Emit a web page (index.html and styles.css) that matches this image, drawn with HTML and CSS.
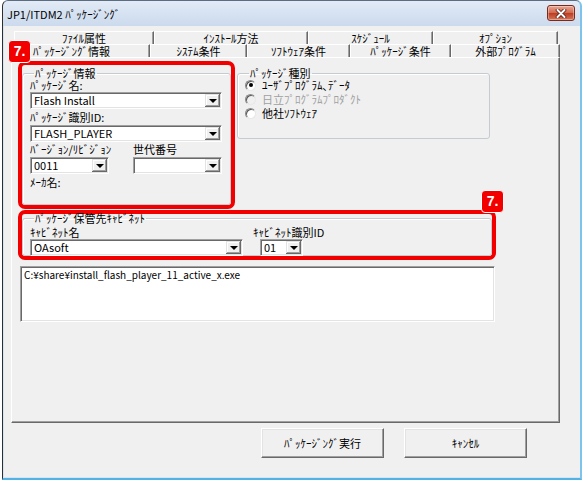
FILE: index.html
```html
<!DOCTYPE html>
<html lang="ja">
<head>
<meta charset="utf-8">
<title>JP1/ITDM2 ﾊﾟｯｹｰｼﾞﾝｸﾞ</title>
<link rel="stylesheet" href="styles.css">
</head>
<body>
<div class="window">
  <div class="titlebar">
    <span class="title">JP1/ITDM2 ﾊﾟｯｹｰｼﾞﾝｸﾞ</span>
    <div class="close"><svg width="12" height="9" viewBox="0 0 12 9"><path d="M2.5 1 L9.5 8 M9.5 1 L2.5 8" stroke="#5a1a10" stroke-width="3.6" stroke-linecap="round"/><path d="M2.5 1 L9.5 8 M9.5 1 L2.5 8" stroke="#fff" stroke-width="2" stroke-linecap="round"/></svg></div>
  </div>
  <div class="client">
    <div class="tabs">
      <div class="tabrow row1">
        <div class="tab">ﾌｧｲﾙ属性</div>
        <div class="tab">ｲﾝｽﾄｰﾙ方法</div>
        <div class="tab">ｽｹｼﾞｭｰﾙ</div>
        <div class="tab">ｵﾌﾟｼｮﾝ</div>
      </div>
      <div class="tabrow row2">
        <div class="tab selected">ﾊﾟｯｹｰｼﾞﾝｸﾞ情報</div>
        <div class="tab">ｼｽﾃﾑ条件</div>
        <div class="tab">ｿﾌﾄｳｪｱ条件</div>
        <div class="tab">ﾊﾟｯｹｰｼﾞ条件</div>
        <div class="tab">外部ﾌﾟﾛｸﾞﾗﾑ</div>
      </div>
      <div class="page">
        <div class="top">
          <div class="redbox red-info">
            <fieldset class="group info">
              <legend>ﾊﾟｯｹｰｼﾞ情報</legend>
              <div class="lbl">ﾊﾟｯｹｰｼﾞ名:</div>
              <div class="combo c-wide m1"><span class="val">Flash Install</span><span class="drop"></span></div>
              <div class="lbl m2">ﾊﾟｯｹｰｼﾞ識別ID:</div>
              <div class="combo c-wide m2"><span class="val">FLASH_PLAYER</span><span class="drop"></span></div>
              <div class="vergrid">
                <div class="lbl">ﾊﾞｰｼﾞｮﾝ/ﾘﾋﾞｼﾞｮﾝ</div>
                <div class="lbl">世代番号</div>
                <div class="combo"><span class="val">0011</span><span class="drop"></span></div>
                <div class="combo"><span class="val"></span><span class="drop"></span></div>
              </div>
              <div class="lbl m2">ﾒｰｶ名:</div>
            </fieldset>
          </div>
          <fieldset class="group kind">
            <legend>ﾊﾟｯｹｰｼﾞ種別</legend>
            <div class="radios">
              <div class="rrow"><span class="radio checked"></span><span>ﾕｰｻﾞﾌﾟﾛｸﾞﾗﾑ､ﾃﾞｰﾀ</span></div>
              <div class="rrow disabled"><span class="radio"></span><span>日立ﾌﾟﾛｸﾞﾗﾑﾌﾟﾛﾀﾞｸﾄ</span></div>
              <div class="rrow"><span class="radio"></span><span>他社ｿﾌﾄｳｪｱ</span></div>
            </div>
          </fieldset>
        </div>
        <div class="redbox red-cab">
          <fieldset class="group cab">
            <legend>ﾊﾟｯｹｰｼﾞ保管先ｷｬﾋﾞﾈｯﾄ</legend>
            <div class="cabgrid">
              <div class="lbl">ｷｬﾋﾞﾈｯﾄ名</div>
              <div class="lbl">ｷｬﾋﾞﾈｯﾄ識別ID</div>
              <div class="combo"><span class="val">OAsoft</span><span class="drop"></span></div>
              <div class="combo c-id"><span class="val">01</span><span class="drop"></span></div>
            </div>
          </fieldset>
        </div>
        <div class="textbox">C:¥share¥install_flash_player_11_active_x.exe</div>
      </div>
    </div>
    <div class="buttons">
      <div class="btn">ﾊﾟｯｹｰｼﾞﾝｸﾞ実行</div>
      <div class="btn">ｷｬﾝｾﾙ</div>
    </div>
    <div class="badge b1">7.</div>
    <div class="badge b2">7.</div>
  </div>
</div>
</body>
</html>
```
FILE: styles.css
```css
* { box-sizing: border-box; }
html, body { margin: 0; padding: 0; background: #fff; }
body {
  font: 11px/12px "Noto Sans CJK JP", "Liberation Sans", sans-serif;
  font-feature-settings: "palt" 1;
  color: #000;
}

.window {
  margin-left: 2px;
  width: 580px;
  height: 480px;
  border-left: 1px solid #2e2e2e;
  border-top: 1px solid #5d6d80;
  border-right: 2px solid #7cc4ec;
  border-bottom: 2px solid #52b2e4;
  border-radius: 6px 6px 0 0;
  background: linear-gradient(#e2ebf6, #cbdaed 25px, #d6e4f3 25px);
  display: flex;
  flex-direction: column;
}

.titlebar {
  height: 25px;
  display: flex;
  align-items: flex-start;
  padding-left: 4px;
}
.title {
  font-size: 11px;
  line-height: 14px;
  margin-top: 6px;
}
.close {
  margin-left: auto;
  margin-right: 5px;
  margin-top: 4px;
  width: 28px;
  height: 16px;
  border: 1px solid #7b2a1a;
  border-radius: 3px;
  background: linear-gradient(#eba793, #d06a50 48%, #bd3c22 52%, #d5765a);
  box-shadow: inset 0 0 0 1px rgba(255,255,255,0.35);
  display: flex;
  align-items: center;
  justify-content: center;
}

.client {
  flex: 1;
  margin: 0 0 1px 1px;
  background: #f0f0f0;
  position: relative;
  padding-top: 5px;
}

.tabs {
  margin-left: 7px;
  width: 549px;
}
.tabrow {
  display: grid;
  height: 13px;
}
.row1 {
  margin-left: 3px;
  grid-template-columns: 140px 154px 125px 125px;
}
.row2 {
  grid-template-columns: 139px 97px 103px 101px 109px;
}
.tab {
  border-top: 1px solid #fff;
  border-left: 1px solid #fff;
  border-right: 1px solid #696969;
  box-shadow: inset -1px 0 0 #a0a0a0;
  text-align: center;
  line-height: 12px;
  white-space: nowrap;
}
.tab.selected {
  padding-right: 18px;
}

.page {
  height: 366px;
  border-top: 1px solid #fff;
  border-left: 1px solid #fff;
  border-right: 1px solid #696969;
  border-bottom: 1px solid #696969;
  box-shadow: inset -1px -1px 0 #a0a0a0;
}

.top {
  display: flex;
  align-items: flex-start;
  padding-left: 6px;
}

.redbox {
  border: 4px solid #f20000;
  border-radius: 7px;
}
.red-info {
  margin-top: 3px;
  width: 217px;
  height: 148px;
}
.red-cab {
  margin: 1px 0 0 6px;
  width: 478px;
  height: 50px;
}

.group {
  margin: 0;
  border: 1px solid #c4ccd2;
  border-radius: 3px;
  box-shadow: inset 1px 1px 0 #fff;
  padding: 0 0 0 7px;
  min-width: 0;
}
.group legend {
  margin-left: 4px;
  padding: 0 1px;
  line-height: 12px;
  height: 12px;
}

.info {
  margin-top: 2px;
  width: 100%;
  height: 138px;
}
.kind {
  margin: 9px 0 0 2px;
  width: 253px;
  height: 72px;
}
.cab {
  margin-top: -2px;
  width: 100%;
  height: 44px;
  padding-top: 2px;
}

.lbl {
  line-height: 12px;
  height: 12px;
  white-space: nowrap;
}
.m1 { margin-top: 1px; }
.m2 { margin-top: 2px; }

.combo {
  height: 17px;
  background: #fff;
  border: 1px solid;
  border-color: #a0a0a0 #fff #fff #a0a0a0;
  box-shadow: inset 1px 1px 0 #696969, inset -1px -1px 0 #e3e3e3;
  display: flex;
  align-items: center;
  padding: 1px 1px 1px 3px;
}
.c-wide { width: 192px; }
.combo .val {
  flex: 1;
  line-height: 13px;
  white-space: nowrap;
}
.combo .drop {
  width: 15px;
  height: 13px;
  flex: none;
  background: #f0f0f0;
  box-shadow: inset -1px -1px 0 #696969, inset 1px 1px 0 #e3e3e3, inset -2px -2px 0 #a0a0a0, inset 2px 2px 0 #fff;
  display: flex;
  align-items: center;
  justify-content: center;
}
.combo .drop::after {
  content: "";
  width: 0;
  height: 0;
  border-left: 4px solid transparent;
  border-right: 4px solid transparent;
  border-top: 4px solid #000;
  margin-top: 1px;
}

.vergrid {
  margin-top: 1px;
  display: grid;
  grid-template-columns: 79px 89px;
  column-gap: 24px;
  row-gap: 2px;
}

.radios {
  margin-top: -1px;
}
.rrow {
  display: flex;
  align-items: center;
  height: 14px;
  white-space: nowrap;
}
.rrow.disabled { color: #a0a0a0; }
.radio {
  width: 11px;
  height: 11px;
  flex: none;
  border-radius: 50%;
  border: 1px solid;
  border-color: #8a8a8a #e8e8e8 #e8e8e8 #8a8a8a;
  background: #fff;
  box-shadow: inset 1px 1px 0 #5a5a5a;
  margin-right: 6px;
  display: flex;
  align-items: center;
  justify-content: center;
}
.disabled .radio { background: #f0f0f0; }
.radio.checked::after {
  content: "";
  width: 4px;
  height: 4px;
  border-radius: 50%;
  background: #000;
}

.cabgrid {
  display: grid;
  grid-template-columns: 213px 50px;
  column-gap: 10px;
  row-gap: 1px;
}
.c-id {
  margin-left: 7px;
  width: 43px;
}

.textbox {
  margin: 6px 0 0 8px;
  width: 475px;
  height: 56px;
  background: #fff;
  border: 1px solid;
  border-color: #a0a0a0 #fff #fff #a0a0a0;
  box-shadow: inset 1px 1px 0 #696969, inset -1px -1px 0 #e3e3e3;
  padding: 2px 3px;
  font-size: 10px;
  line-height: 12px;
}

.buttons {
  display: flex;
  gap: 20px;
  margin: 5px 0 0 257px;
}
.btn {
  width: 123px;
  height: 30px;
  border: 1px solid;
  border-color: #fff #696969 #696969 #fff;
  box-shadow: inset -1px -1px 0 #a0a0a0, inset 1px 1px 0 #e3e3e3;
  background: #f0f0f0;
  display: flex;
  align-items: center;
  justify-content: center;
}

.badge {
  position: absolute;
  width: 23px;
  height: 23px;
  background: #f20000;
  border: 1px solid #fff;
  border-radius: 4px;
  color: #fff;
  font: bold 14px/21px "Liberation Sans", sans-serif;
  text-align: center;
}
.b1 { left: 4px; top: 14px; }
.b2 { left: 477px; top: 164px; }
```
